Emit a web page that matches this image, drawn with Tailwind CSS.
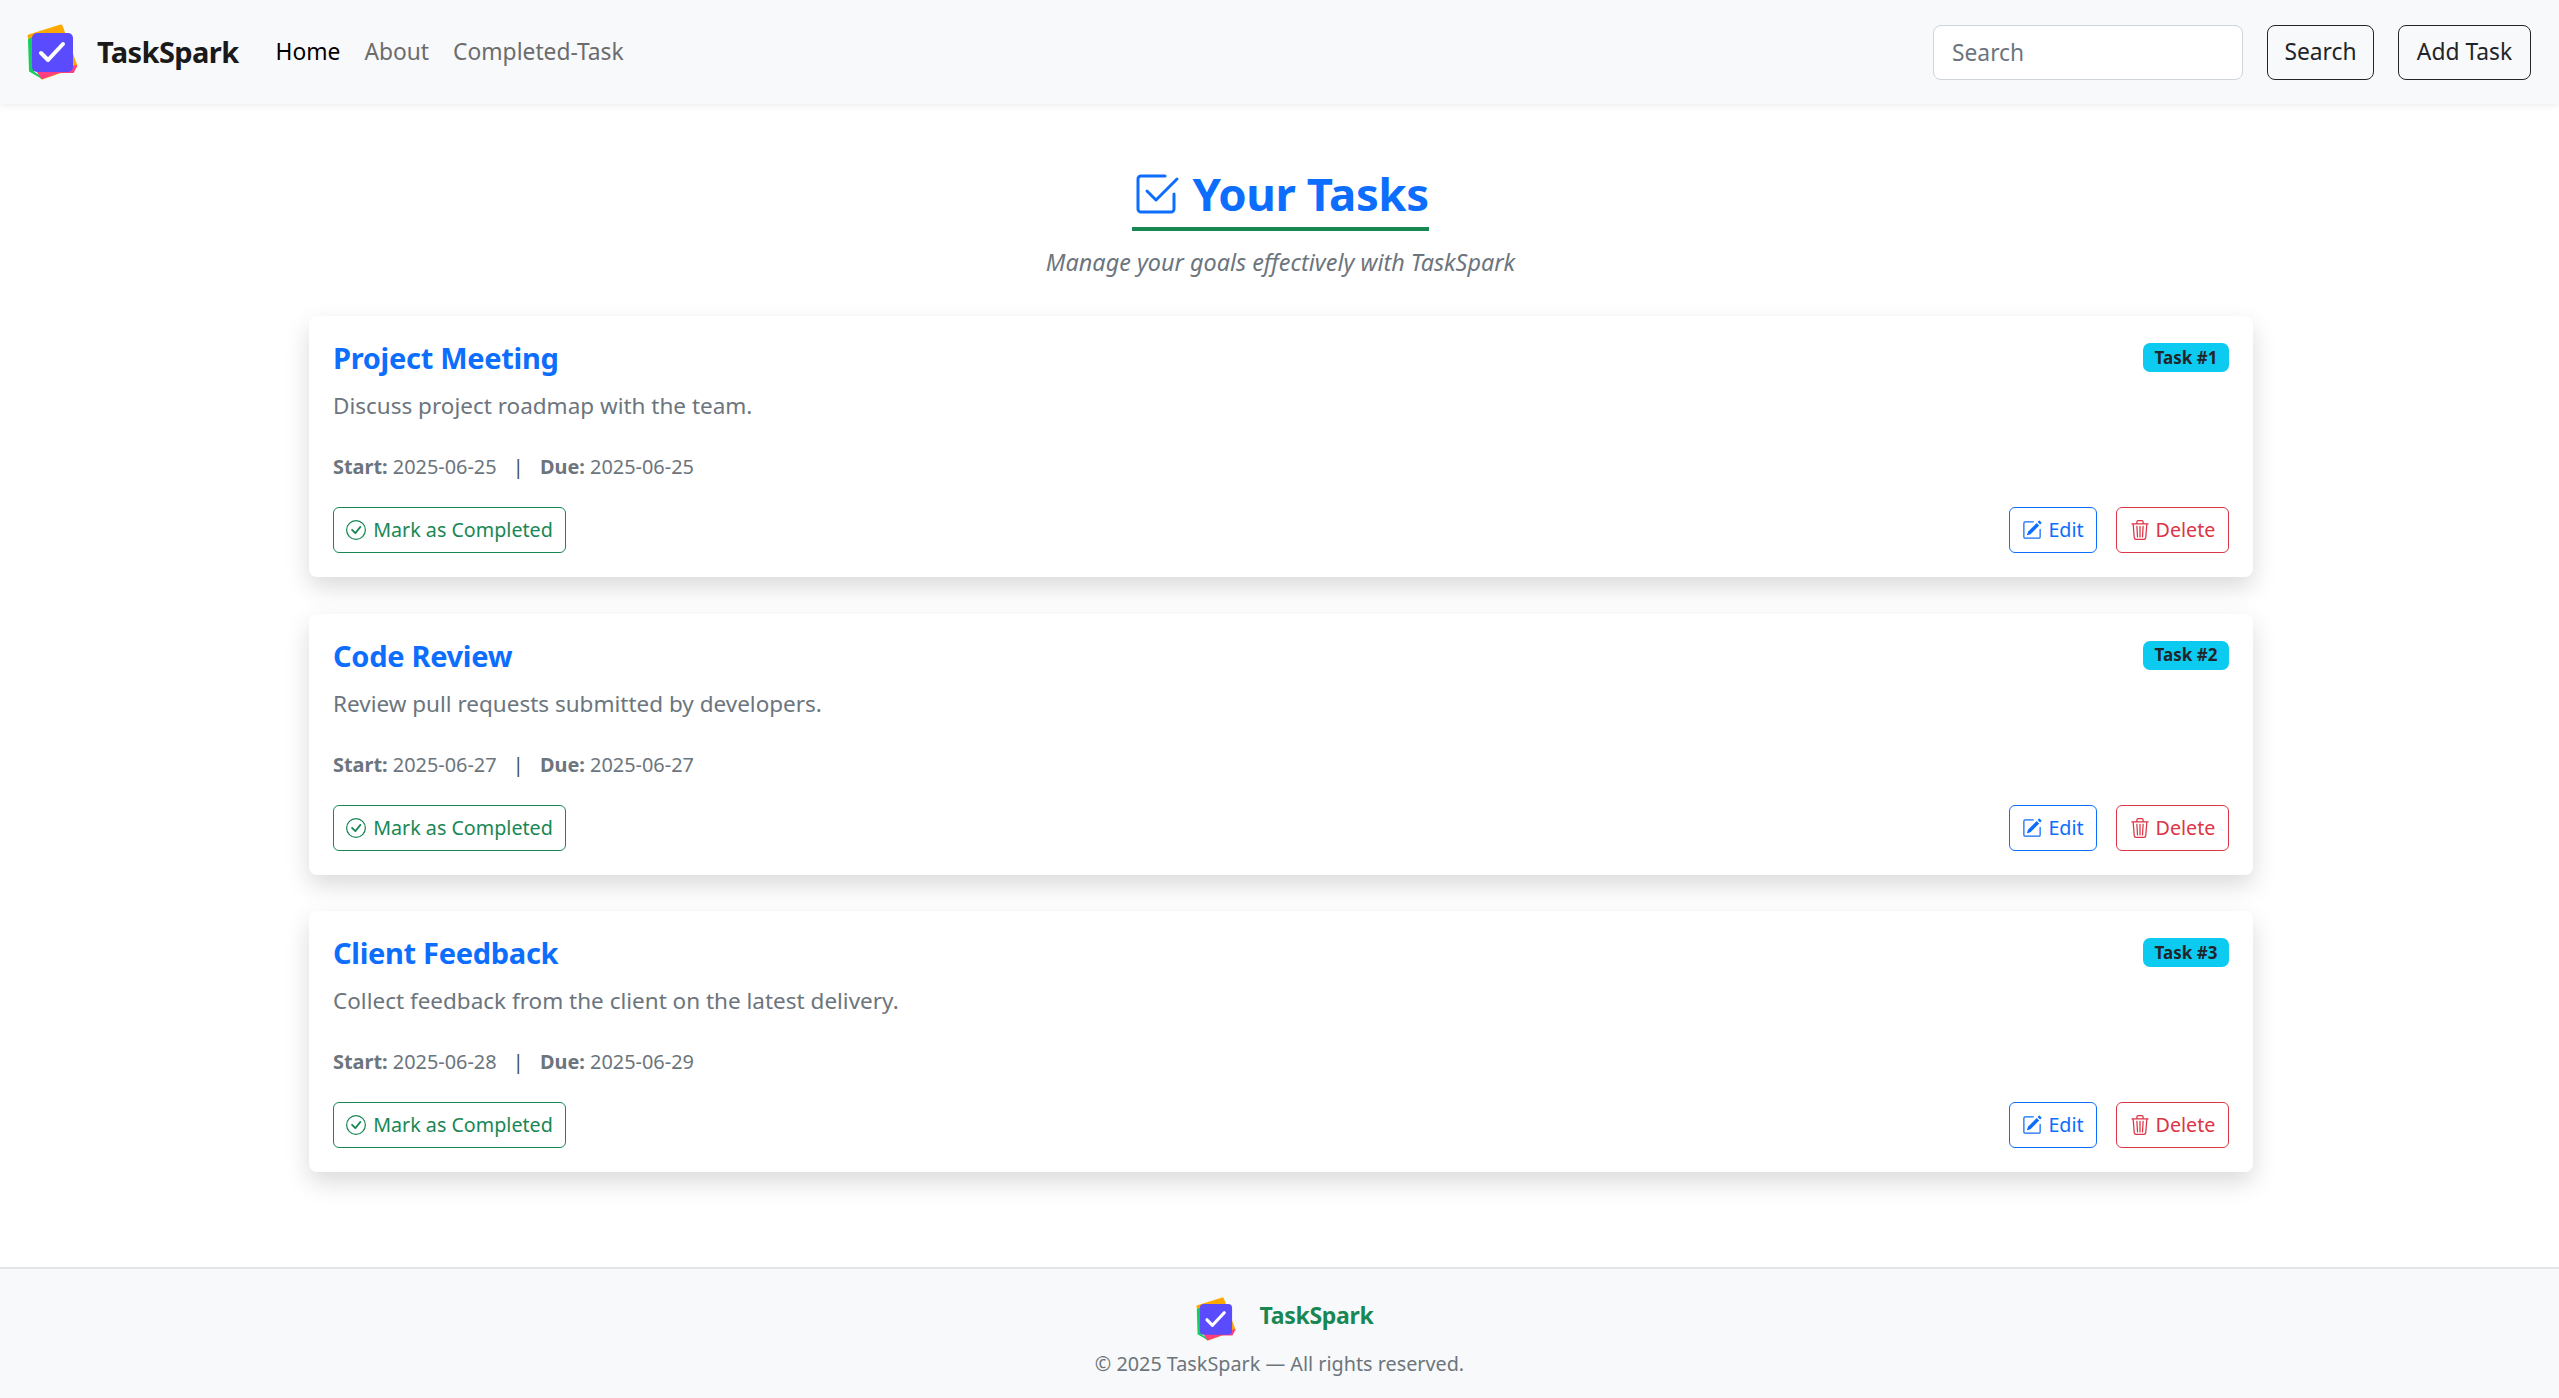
<!DOCTYPE html>
<html lang="en">
<head>
    <meta charset="UTF-8">
    <meta name="viewport" content="width=device-width, initial-scale=1.0">
    <title>TaskSpark</title>
    <script src="https://cdn.jsdelivr.net/npm/@tailwindcss/browser@4"></script>
</head>
<body class="bg-white font-['Noto_Sans',sans-serif] text-[#212529] min-h-screen flex flex-col">
    <!-- navbar -->
    <nav class="bg-[#f8f9fa] h-[104px] shadow-[0_2px_6px_rgba(0,0,0,0.07)] flex items-center pl-[27px] pr-[28px]">
        <svg class="w-[51px] h-[56px]" viewBox="27 24 51 56">
            <path d="M29 36 61 26 76 66 42 78z" fill="#ffa800" stroke="#ffa800" stroke-width="3" stroke-linejoin="round"/>
            <path d="M29 40 33 38V72L42 78 30 71z" fill="#14cf5f" stroke="#14cf5f" stroke-width="2" stroke-linejoin="round"/>
            <path d="M38 72H73L76 66 42 78z" fill="#ff3f7f" stroke="#ff3f7f" stroke-width="2" stroke-linejoin="round"/>
            <rect x="32" y="33" width="41" height="39" rx="5" fill="#5a4bff"/>
            <path d="M41 53 48 60 63 44" fill="none" stroke="#fff" stroke-width="4" stroke-linecap="round" stroke-linejoin="round"/>
        </svg>
        <span class="ml-[19px] text-[29px] font-bold text-[#1a1a1a] tracking-[-0.6px]">TaskSpark</span>
        <div class="ml-[37px] flex gap-[24px] text-[22.8px]">
            <a class="text-black">Home</a>
            <a class="text-[#6c6c6c]">About</a>
            <a class="text-[#6c6c6c]">Completed-Task</a>
        </div>
        <form class="ml-auto flex items-center">
            <input type="text" placeholder="Search" class="w-[310px] h-[55px] bg-white border border-[#ced4da] rounded-[8px] px-[18px] text-[22.8px] outline-none placeholder:text-[#6c757d]">
            <button type="button" class="ml-[24px] w-[107px] h-[55px] border border-[#212529] rounded-[8px] text-[22.8px]">Search</button>
            <button type="button" class="ml-[24px] w-[133px] h-[55px] border border-[#212529] rounded-[8px] text-[22.8px]">Add Task</button>
        </form>
    </nav>

    <main class="w-[1944px] ml-[309px]">
        <!-- heading -->
        <header class="text-center pt-[58px] pr-[1px]">
            <h1 class="inline-flex items-center gap-[12px] border-b-[4px] border-[#198754] pb-[2px] text-[#0d6efd] text-[45.5px] font-bold leading-[63px] tracking-[-0.4px]">
                <svg class="w-[48px] h-[48px]" viewBox="0 0 16 16" fill="currentColor">
                    <path d="M3 14.5A1.5 1.5 0 0 1 1.5 13V3A1.5 1.5 0 0 1 3 1.5h8a.5.5 0 0 1 0 1H3a.5.5 0 0 0-.5.5v10a.5.5 0 0 0 .5.5h10a.5.5 0 0 0 .5-.5V8a.5.5 0 0 1 1 0v5a1.5 1.5 0 0 1-1.5 1.5z"/>
                    <path d="m8.354 10.354 7-7a.5.5 0 0 0-.708-.708L8 9.293 5.354 6.646a.5.5 0 1 0-.708.708l3 3a.5.5 0 0 0 .708 0"/>
                </svg>
                Your Tasks
            </h1>
            <p class="mt-[15px] italic text-[23.4px] text-[#6c757d] leading-[32px]">Manage your goals effectively with TaskSpark</p>
        </header>

        <!-- task cards -->
        <section class="mt-[38px] flex flex-col gap-[36.5px]">

            <article class="bg-white rounded-[8px] h-[261px] px-[24px] pt-[22px] shadow-[0_10px_24px_rgba(0,0,0,0.15)] flex flex-col">
                <div class="flex justify-between items-start">
                    <h2 class="text-[29px] font-bold text-[#0d6efd] leading-[40px] tracking-[-0.3px]">Project Meeting</h2>
                    <span class="mt-[5px] w-[86px] h-[29px] flex items-center justify-center bg-[#0dcaf0] rounded-[7px] text-[17px] font-bold">Task #1</span>
                </div>
                <p class="mt-[12px] text-[22.5px] leading-[32px] text-[#6c757d]">Discuss project roadmap with the team.</p>
                <p class="mt-[31px] text-[19.9px] leading-[28px] text-[#6c757d]"><strong class="font-bold">Start:</strong> 2025-06-25 <span class="mx-[11px] text-[#495057]">|</span> <strong class="font-bold">Due:</strong> 2025-06-25</p>
                <div class="mt-[26px] flex justify-between items-center">
                    <button class="h-[46px] w-[233px] flex items-center justify-center gap-[7px] border border-[#198754] rounded-[6px] text-[#198754] text-[19.7px]">
                        <svg class="w-[20px] h-[20px]" viewBox="0 0 16 16" fill="currentColor"><path d="M8 15A7 7 0 1 1 8 1a7 7 0 0 1 0 14m0 1A8 8 0 1 0 8 0a8 8 0 0 0 0 16"/><path d="m10.97 4.97-.02.022-3.473 4.425-2.093-2.094a.75.75 0 0 0-1.06 1.06L6.97 11.03a.75.75 0 0 0 1.079-.02l3.992-4.99a.75.75 0 0 0-1.071-1.05"/></svg>
                        Mark as Completed
                    </button>
                    <div class="flex gap-[19px]">
                        <button class="h-[46px] w-[88px] flex items-center justify-center gap-[6px] border border-[#0d6efd] rounded-[6px] text-[#0d6efd] text-[19.7px]">
                            <svg class="w-[20px] h-[20px]" viewBox="0 0 16 16" fill="currentColor"><path d="M15.502 1.94a.5.5 0 0 1 0 .706L14.459 3.69l-2-2L13.502.646a.5.5 0 0 1 .707 0l1.293 1.293zm-1.75 2.456-2-2L4.939 9.21a.5.5 0 0 0-.121.196l-.805 2.414a.25.25 0 0 0 .316.316l2.414-.805a.5.5 0 0 0 .196-.12l6.813-6.814z"/><path fill-rule="evenodd" d="M1 13.5A1.5 1.5 0 0 0 2.5 15h11a1.5 1.5 0 0 0 1.5-1.5v-6a.5.5 0 0 0-1 0v6a.5.5 0 0 1-.5.5h-11a.5.5 0 0 1-.5-.5v-11a.5.5 0 0 1 .5-.5H9a.5.5 0 0 0 0-1H2.5A1.5 1.5 0 0 0 1 2.5z"/></svg>
                            Edit
                        </button>
                        <button class="h-[46px] w-[113px] flex items-center justify-center gap-[6px] border border-[#dc3545] rounded-[6px] text-[#dc3545] text-[19.7px]">
                            <svg class="w-[20px] h-[20px]" viewBox="0 0 16 16" fill="currentColor"><path d="M6.5 1h3a.5.5 0 0 1 .5.5v1H6v-1a.5.5 0 0 1 .5-.5M11 2.5v-1A1.5 1.5 0 0 0 9.5 0h-3A1.5 1.5 0 0 0 5 1.5v1H1.5a.5.5 0 0 0 0 1h.538l.853 10.66A2 2 0 0 0 4.885 16h6.23a2 2 0 0 0 1.994-1.84l.853-10.66h.538a.5.5 0 0 0 0-1zm1.958 1-.846 10.58a1 1 0 0 1-.997.92h-6.23a1 1 0 0 1-.997-.92L3.042 3.5zm-7.487 1a.5.5 0 0 1 .528.47l.5 8.5a.5.5 0 0 1-.998.06L5 5.03a.5.5 0 0 1 .47-.53Zm5.058 0a.5.5 0 0 1 .47.53l-.5 8.5a.5.5 0 1 1-.998-.06l.5-8.5a.5.5 0 0 1 .528-.47M8 4.5a.5.5 0 0 1 .5.5v8.5a.5.5 0 0 1-1 0V5a.5.5 0 0 1 .5-.5"/></svg>
                            Delete
                        </button>
                    </div>
                </div>
            </article>

            <article class="bg-white rounded-[8px] h-[261px] px-[24px] pt-[22px] shadow-[0_10px_24px_rgba(0,0,0,0.15)] flex flex-col">
                <div class="flex justify-between items-start">
                    <h2 class="text-[29px] font-bold text-[#0d6efd] leading-[40px] tracking-[-0.3px]">Code Review</h2>
                    <span class="mt-[5px] w-[86px] h-[29px] flex items-center justify-center bg-[#0dcaf0] rounded-[7px] text-[17px] font-bold">Task #2</span>
                </div>
                <p class="mt-[12px] text-[22.5px] leading-[32px] text-[#6c757d]">Review pull requests submitted by developers.</p>
                <p class="mt-[31px] text-[19.9px] leading-[28px] text-[#6c757d]"><strong class="font-bold">Start:</strong> 2025-06-27 <span class="mx-[11px] text-[#495057]">|</span> <strong class="font-bold">Due:</strong> 2025-06-27</p>
                <div class="mt-[26px] flex justify-between items-center">
                    <button class="h-[46px] w-[233px] flex items-center justify-center gap-[7px] border border-[#198754] rounded-[6px] text-[#198754] text-[19.7px]">
                        <svg class="w-[20px] h-[20px]" viewBox="0 0 16 16" fill="currentColor"><path d="M8 15A7 7 0 1 1 8 1a7 7 0 0 1 0 14m0 1A8 8 0 1 0 8 0a8 8 0 0 0 0 16"/><path d="m10.97 4.97-.02.022-3.473 4.425-2.093-2.094a.75.75 0 0 0-1.06 1.06L6.97 11.03a.75.75 0 0 0 1.079-.02l3.992-4.99a.75.75 0 0 0-1.071-1.05"/></svg>
                        Mark as Completed
                    </button>
                    <div class="flex gap-[19px]">
                        <button class="h-[46px] w-[88px] flex items-center justify-center gap-[6px] border border-[#0d6efd] rounded-[6px] text-[#0d6efd] text-[19.7px]">
                            <svg class="w-[20px] h-[20px]" viewBox="0 0 16 16" fill="currentColor"><path d="M15.502 1.94a.5.5 0 0 1 0 .706L14.459 3.69l-2-2L13.502.646a.5.5 0 0 1 .707 0l1.293 1.293zm-1.75 2.456-2-2L4.939 9.21a.5.5 0 0 0-.121.196l-.805 2.414a.25.25 0 0 0 .316.316l2.414-.805a.5.5 0 0 0 .196-.12l6.813-6.814z"/><path fill-rule="evenodd" d="M1 13.5A1.5 1.5 0 0 0 2.5 15h11a1.5 1.5 0 0 0 1.5-1.5v-6a.5.5 0 0 0-1 0v6a.5.5 0 0 1-.5.5h-11a.5.5 0 0 1-.5-.5v-11a.5.5 0 0 1 .5-.5H9a.5.5 0 0 0 0-1H2.5A1.5 1.5 0 0 0 1 2.5z"/></svg>
                            Edit
                        </button>
                        <button class="h-[46px] w-[113px] flex items-center justify-center gap-[6px] border border-[#dc3545] rounded-[6px] text-[#dc3545] text-[19.7px]">
                            <svg class="w-[20px] h-[20px]" viewBox="0 0 16 16" fill="currentColor"><path d="M6.5 1h3a.5.5 0 0 1 .5.5v1H6v-1a.5.5 0 0 1 .5-.5M11 2.5v-1A1.5 1.5 0 0 0 9.5 0h-3A1.5 1.5 0 0 0 5 1.5v1H1.5a.5.5 0 0 0 0 1h.538l.853 10.66A2 2 0 0 0 4.885 16h6.23a2 2 0 0 0 1.994-1.84l.853-10.66h.538a.5.5 0 0 0 0-1zm1.958 1-.846 10.58a1 1 0 0 1-.997.92h-6.23a1 1 0 0 1-.997-.92L3.042 3.5zm-7.487 1a.5.5 0 0 1 .528.47l.5 8.5a.5.5 0 0 1-.998.06L5 5.03a.5.5 0 0 1 .47-.53Zm5.058 0a.5.5 0 0 1 .47.53l-.5 8.5a.5.5 0 1 1-.998-.06l.5-8.5a.5.5 0 0 1 .528-.47M8 4.5a.5.5 0 0 1 .5.5v8.5a.5.5 0 0 1-1 0V5a.5.5 0 0 1 .5-.5"/></svg>
                            Delete
                        </button>
                    </div>
                </div>
            </article>

            <article class="bg-white rounded-[8px] h-[261px] px-[24px] pt-[22px] shadow-[0_10px_24px_rgba(0,0,0,0.15)] flex flex-col">
                <div class="flex justify-between items-start">
                    <h2 class="text-[29px] font-bold text-[#0d6efd] leading-[40px] tracking-[-0.3px]">Client Feedback</h2>
                    <span class="mt-[5px] w-[86px] h-[29px] flex items-center justify-center bg-[#0dcaf0] rounded-[7px] text-[17px] font-bold">Task #3</span>
                </div>
                <p class="mt-[12px] text-[22.5px] leading-[32px] text-[#6c757d]">Collect feedback from the client on the latest delivery.</p>
                <p class="mt-[31px] text-[19.9px] leading-[28px] text-[#6c757d]"><strong class="font-bold">Start:</strong> 2025-06-28 <span class="mx-[11px] text-[#495057]">|</span> <strong class="font-bold">Due:</strong> 2025-06-29</p>
                <div class="mt-[26px] flex justify-between items-center">
                    <button class="h-[46px] w-[233px] flex items-center justify-center gap-[7px] border border-[#198754] rounded-[6px] text-[#198754] text-[19.7px]">
                        <svg class="w-[20px] h-[20px]" viewBox="0 0 16 16" fill="currentColor"><path d="M8 15A7 7 0 1 1 8 1a7 7 0 0 1 0 14m0 1A8 8 0 1 0 8 0a8 8 0 0 0 0 16"/><path d="m10.97 4.97-.02.022-3.473 4.425-2.093-2.094a.75.75 0 0 0-1.06 1.06L6.97 11.03a.75.75 0 0 0 1.079-.02l3.992-4.99a.75.75 0 0 0-1.071-1.05"/></svg>
                        Mark as Completed
                    </button>
                    <div class="flex gap-[19px]">
                        <button class="h-[46px] w-[88px] flex items-center justify-center gap-[6px] border border-[#0d6efd] rounded-[6px] text-[#0d6efd] text-[19.7px]">
                            <svg class="w-[20px] h-[20px]" viewBox="0 0 16 16" fill="currentColor"><path d="M15.502 1.94a.5.5 0 0 1 0 .706L14.459 3.69l-2-2L13.502.646a.5.5 0 0 1 .707 0l1.293 1.293zm-1.75 2.456-2-2L4.939 9.21a.5.5 0 0 0-.121.196l-.805 2.414a.25.25 0 0 0 .316.316l2.414-.805a.5.5 0 0 0 .196-.12l6.813-6.814z"/><path fill-rule="evenodd" d="M1 13.5A1.5 1.5 0 0 0 2.5 15h11a1.5 1.5 0 0 0 1.5-1.5v-6a.5.5 0 0 0-1 0v6a.5.5 0 0 1-.5.5h-11a.5.5 0 0 1-.5-.5v-11a.5.5 0 0 1 .5-.5H9a.5.5 0 0 0 0-1H2.5A1.5 1.5 0 0 0 1 2.5z"/></svg>
                            Edit
                        </button>
                        <button class="h-[46px] w-[113px] flex items-center justify-center gap-[6px] border border-[#dc3545] rounded-[6px] text-[#dc3545] text-[19.7px]">
                            <svg class="w-[20px] h-[20px]" viewBox="0 0 16 16" fill="currentColor"><path d="M6.5 1h3a.5.5 0 0 1 .5.5v1H6v-1a.5.5 0 0 1 .5-.5M11 2.5v-1A1.5 1.5 0 0 0 9.5 0h-3A1.5 1.5 0 0 0 5 1.5v1H1.5a.5.5 0 0 0 0 1h.538l.853 10.66A2 2 0 0 0 4.885 16h6.23a2 2 0 0 0 1.994-1.84l.853-10.66h.538a.5.5 0 0 0 0-1zm1.958 1-.846 10.58a1 1 0 0 1-.997.92h-6.23a1 1 0 0 1-.997-.92L3.042 3.5zm-7.487 1a.5.5 0 0 1 .528.47l.5 8.5a.5.5 0 0 1-.998.06L5 5.03a.5.5 0 0 1 .47-.53Zm5.058 0a.5.5 0 0 1 .47.53l-.5 8.5a.5.5 0 1 1-.998-.06l.5-8.5a.5.5 0 0 1 .528-.47M8 4.5a.5.5 0 0 1 .5.5v8.5a.5.5 0 0 1-1 0V5a.5.5 0 0 1 .5-.5"/></svg>
                            Delete
                        </button>
                    </div>
                </div>
            </article>

        </section>
    </main>

    <!-- footer -->
    <footer class="mt-auto h-[131px] bg-[#f8f9fa] border-t-2 border-[#e4e6e8] flex flex-col items-center pt-[24px]">
        <div class="flex items-center gap-[24px] pl-[10px]">
            <svg class="w-[40px] h-[44px] mt-[4px]" viewBox="27 24 51 56">
                <path d="M29 36 61 26 76 66 42 78z" fill="#ffa800" stroke="#ffa800" stroke-width="3" stroke-linejoin="round"/>
                <path d="M29 40 33 38V72L42 78 30 71z" fill="#14cf5f" stroke="#14cf5f" stroke-width="2" stroke-linejoin="round"/>
                <path d="M38 72H73L76 66 42 78z" fill="#ff3f7f" stroke="#ff3f7f" stroke-width="2" stroke-linejoin="round"/>
                <rect x="32" y="33" width="41" height="39" rx="5" fill="#5a4bff"/>
                <path d="M41 53 48 60 63 44" fill="none" stroke="#fff" stroke-width="4" stroke-linecap="round" stroke-linejoin="round"/>
            </svg>
            <span class="mb-[3px] text-[23px] font-bold text-[#198754] tracking-[-0.3px]">TaskSpark</span>
        </div>
        <p class="mt-[8px] text-[19.8px] text-[#6c757d]">© 2025 TaskSpark — All rights reserved.</p>
    </footer>
</body>
</html>
